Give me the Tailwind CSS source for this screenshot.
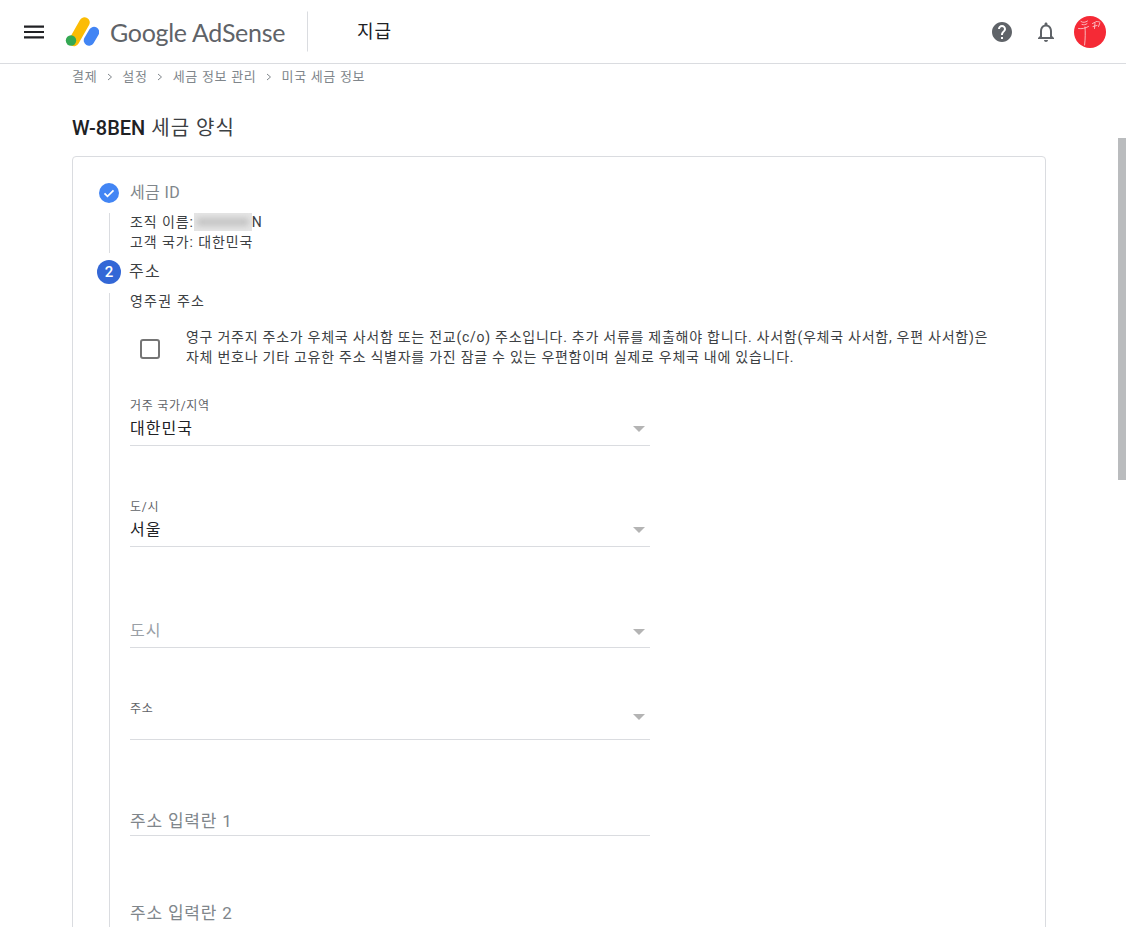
<!DOCTYPE html>
<html lang="ko">
<head>
  <meta charset="UTF-8">
  <title>Google AdSense - 지급</title>
  <script src="https://cdn.jsdelivr.net/npm/@tailwindcss/browser@4"></script>
</head>
<body class="bg-white text-[#3c4043] font-['Roboto','Noto_Sans_CJK_KR',sans-serif]">
  <div class="relative h-[927px] w-[1126px] overflow-hidden">
    <!-- Header -->
    <header class="flex h-16 items-center border-b border-[#dadce0] pl-6 pr-5">
      <svg class="h-[14px] w-5" viewBox="0 0 20 14" fill="#202124"><path d="M0 0.5h20v2.2H0zM0 5.9h20v2.2H0zM0 11.3h20v2.2H0z"/></svg>
      <svg class="ml-[21px] h-[32px] w-[34px]" viewBox="0 0 34 32">
        <path d="M9 25 19.5 6.5" stroke="#fbbc04" stroke-width="10.5" stroke-linecap="round" fill="none"/>
        <path d="M24 24.5 29 16" stroke="#4285f4" stroke-width="10.5" stroke-linecap="round" fill="none"/>
        <circle cx="6" cy="24.5" r="5.2" fill="#34a853"/>
      </svg>
      <span class="ml-[11px] translate-y-[1px] text-[25px] tracking-[-0.3px] text-[#5f6368] font-['Lato',sans-serif]">Google AdSense</span>
      <div class="ml-[22px] h-10 w-px -translate-y-[0.5px] self-center bg-[#dadce0]"></div>
      <span class="ml-[49px] text-[18px] tracking-[1px] text-[#202124]">지급</span>
      <div class="ml-auto flex items-center">
        <svg class="h-6 w-6" viewBox="0 0 24 24" fill="#5f6368"><path d="M12 2C6.48 2 2 6.48 2 12s4.48 10 10 10 10-4.48 10-10S17.52 2 12 2zm1 17h-2v-2h2v2zm2.07-7.75-.9.92C13.45 12.9 13 13.5 13 15h-2v-.5c0-1.1.45-2.1 1.17-2.83l1.24-1.26c.37-.36.59-.86.59-1.41 0-1.1-.9-2-2-2s-2 .9-2 2H8c0-2.21 1.79-4 4-4s4 1.79 4 4c0 .88-.36 1.68-.93 2.25z"/></svg>
        <svg class="ml-[20px] h-6 w-6" viewBox="0 0 24 24" fill="#5f6368"><path d="M12 22c1.1 0 2-.9 2-2h-4c0 1.1.9 2 2 2zm6-6v-5c0-3.07-1.63-5.64-4.5-6.32V4c0-.83-.67-1.5-1.5-1.5s-1.5.67-1.5 1.5v.68C7.64 5.36 6 7.92 6 11v5l-2 2v1h16v-1l-2-2zm-2 1H8v-6c0-2.48 1.51-4.5 4-4.5s4 2.02 4 4.5v6z"/></svg>
        <svg class="ml-4 h-8 w-8" viewBox="0 0 32 32">
          <circle cx="16" cy="16" r="16" fill="#f52a36"/>
          <path d="M7 5.5c2 1.400 4 1 6.500-.5M8 8.500c2 .6 3.500 .2 5-.8M4.500 12.500c3.500 .6 6.500-.2 10-2M11 11c.4 5 .4 11-.4 18" stroke="#fbc6ca" stroke-width="0.9" fill="none" stroke-linecap="round"/>
          <path d="M18.500 7.500l3-1.500M22.500 5.500c2 .2 3 .2 3.500 1l-1.500 4M19 10.500l4-1M21 7l-.5 5.500" stroke="#fbc6ca" stroke-width="0.9" fill="none" stroke-linecap="round"/>
        </svg>
      </div>
    </header>

    <!-- Scrollbar thumb -->
    <div class="absolute right-0 top-[138px] h-[342px] w-2 bg-[#babcbe]"></div>

    <main class="pl-[72px] w-[1046px]">
      <!-- Breadcrumb -->
      <nav class="flex h-[26px] items-center text-[13px] tracking-[0.7px] text-[#80868b]">
        <span>결제</span>
        <svg class="mx-[9.5px] h-2 w-[6px]" viewBox="0 0 6 8" fill="none" stroke="#80868b" stroke-width="1"><path d="M1 1l3.5 3L1 7"/></svg>
        <span>설정</span>
        <svg class="mx-[9.5px] h-2 w-[6px]" viewBox="0 0 6 8" fill="none" stroke="#80868b" stroke-width="1"><path d="M1 1l3.5 3L1 7"/></svg>
        <span>세금 정보 관리</span>
        <svg class="mx-[9.5px] h-2 w-[6px]" viewBox="0 0 6 8" fill="none" stroke="#80868b" stroke-width="1"><path d="M1 1l3.5 3L1 7"/></svg>
        <span>미국 세금 정보</span>
      </nav>
      <h1 class="mt-[26px] h-[24px] text-[20px] leading-[24px] tracking-[1px] text-[#3c4043]"><span class="font-medium tracking-normal text-[#202124]">W-8BEN</span> 세금 양식</h1>

      <!-- Card -->
      <section class="mt-[16px] h-[900px] rounded border border-[#dadce0] pl-[26px] pr-[26px] pt-[24px]">
        <!-- Step 1 -->
        <div class="flex h-6 items-center">
          <svg class="h-[20px] w-[20px]" viewBox="0 0 20 20"><circle cx="10" cy="10" r="10" fill="#4285f4"/><path d="M5.5 10.3l3 3 6-6" stroke="#fff" stroke-width="1.7" fill="none"/></svg>
          <span class="ml-[11px] text-[16px] tracking-[0.4px] text-[#80868b]">세금 ID</span>
        </div>
        <div class="ml-[10px] mt-[8px] h-[40px] border-l border-[#dadce0] pl-[20px] text-[14px] leading-[20px] tracking-[0.9px] text-[#3c4043]">
          <div class="flex h-[20px] -translate-y-px items-center">조직 이름:<span class="relative h-[18px] w-[58px] overflow-hidden bg-[#e6e6e6]"><span class="absolute left-[3px] top-[5px] h-[8px] w-[52px] bg-[#c2c2c2] blur-[3px]"></span></span><span class="font-normal tracking-normal">N</span></div>
          <div class="h-[20px] -translate-y-px">고객 국가: 대한민국</div>
        </div>

        <!-- Step 2 -->
        <div class="-ml-[2px] mt-[7px] flex h-6 items-center">
          <span class="flex h-6 w-6 items-center justify-center rounded-full bg-[#3367d6] text-[15px] font-medium text-white">2</span>
          <span class="ml-[8px] text-[16px] tracking-[1.2px] text-[#3c4043]">주소</span>
        </div>

        <div class="ml-[10px] mt-[9px] h-[700px] border-l border-[#dadce0] pl-[20px]">
          <div class="text-[14px] leading-[16px] tracking-[1.2px] text-[#3c4043]">영주권 주소</div>

          <div class="mt-[18px] flex items-center">
            <span class="ml-[10px] h-5 w-5 shrink-0 translate-y-[2px] rounded-[3px] border-2 border-[#757575]"></span>
            <p class="ml-[26px] w-[840px] break-keep text-[14px] leading-[20px] tracking-[0.74px] text-[#3c4043]">영구 거주지 주소가 우체국 사서함 또는 전교(c/o) 주소입니다. 추가 서류를 제출해야 합니다. 사서함(우체국 사서함, 우편 사서함)은 자체 번호나 기타 고유한 주소 식별자를 가진 잠글 수 있는 우편함이며 실제로 우체국 내에 있습니다.</p>
          </div>

          <!-- Fields -->
          <div class="w-[520px]">
            <div class="relative mt-[32px] h-[47px] border-b border-[#dadce0]">
              <div class="text-[12px] leading-[14px] tracking-[0.7px] text-[#5f6368]">거주 국가/지역</div>
              <div class="mt-[4px] text-[16px] leading-[24px] tracking-[1px] text-[#202124]">대한민국</div>
              <span class="absolute right-[5px] top-[27px] h-0 w-0 border-x-[6px] border-t-[6px] border-x-transparent border-t-[#b4b4b4]"></span>
            </div>
            <div class="relative mt-[54px] h-[47px] border-b border-[#dadce0]">
              <div class="text-[12px] leading-[14px] tracking-[0.7px] text-[#5f6368]">도/시</div>
              <div class="mt-[4px] text-[16px] leading-[24px] tracking-[1px] text-[#202124]">서울</div>
              <span class="absolute right-[5px] top-[27px] h-0 w-0 border-x-[6px] border-t-[6px] border-x-transparent border-t-[#b4b4b4]"></span>
            </div>
            <div class="relative mt-[70px] h-[31px] border-b border-[#dadce0] pt-[2px]">
              <div class="text-[16px] leading-[24px] tracking-[1px] text-[#9aa0a6]">도시</div>
              <span class="absolute right-[5px] top-[12px] h-0 w-0 border-x-[6px] border-t-[6px] border-x-transparent border-t-[#b4b4b4]"></span>
            </div>
            <div class="relative mt-[51px] h-[41px] border-b border-[#dadce0] pt-[3px]">
              <div class="text-[12px] leading-[14px] tracking-[0.7px] text-[#5f6368]">주소</div>
              <span class="absolute right-[5px] top-[15px] h-0 w-0 border-x-[6px] border-t-[6px] border-x-transparent border-t-[#b4b4b4]"></span>
            </div>
            <div class="mt-[67px] h-[29px] border-b border-[#dadce0] pt-[2px] text-[17px] leading-[24px] tracking-[0.8px] text-[#80868b]">주소 입력란 1</div>
            <div class="mt-[64px] h-[29px] pt-px text-[17px] leading-[24px] tracking-[0.8px] text-[#80868b]">주소 입력란 2</div>
          </div>
        </div>
      </section>
    </main>
  </div>
</body>
</html>
